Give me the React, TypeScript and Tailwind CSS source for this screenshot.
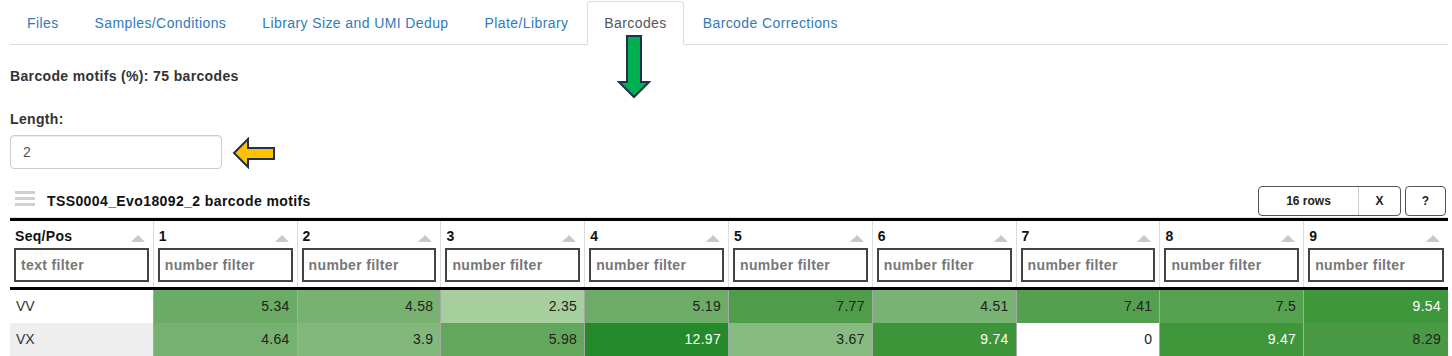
const tabs = [
  "Files",
  "Samples/Conditions",
  "Library Size and UMI Dedup",
  "Plate/Library",
  "Barcodes",
  "Barcode Corrections",
];

const columns = ["Seq/Pos", "1", "2", "3", "4", "5", "6", "7", "8", "9"];

type Cell = { v: string; bg: string; light?: boolean };

const rows: { seq: string; stripe: boolean; cells: Cell[] }[] = [
  {
    seq: "VV",
    stripe: false,
    cells: [
      { v: "5.34", bg: "#6aab65" },
      { v: "4.58", bg: "#78b271" },
      { v: "2.35", bg: "#a7cf9e" },
      { v: "5.19", bg: "#6cac66" },
      { v: "7.77", bg: "#4f9d4a" },
      { v: "4.51", bg: "#79b373" },
      { v: "7.41", bg: "#54a04f" },
      { v: "7.5", bg: "#55a150" },
      { v: "9.54", bg: "#3f973b", light: true },
    ],
  },
  {
    seq: "VX",
    stripe: true,
    cells: [
      { v: "4.64", bg: "#77b171" },
      { v: "3.9", bg: "#83b87c" },
      { v: "5.98", bg: "#62a75c" },
      { v: "12.97", bg: "#248a2b", light: true },
      { v: "3.67", bg: "#88bb81" },
      { v: "9.74", bg: "#3c9539", light: true },
      { v: "0", bg: "#ffffff" },
      { v: "9.47", bg: "#3f963b", light: true },
      { v: "8.29", bg: "#4a9a45" },
    ],
  },
];

function SortCaret() {
  return (
    <svg width="14" height="7" viewBox="0 0 14 7" className="mt-[4px] shrink-0">
      <polygon points="0,7 7,0 14,7" fill="#c8c8c8" />
    </svg>
  );
}

function HeaderCell({ label, last }: { label: string; last: boolean }) {
  return (
    <div
      className={`px-[4px] pt-[5px] pb-[5px] ${last ? "" : "border-r border-[#dddddd]"}`}
    >
      <div className="flex h-[20px] items-center justify-between pl-px pr-[4px]">
        <span className="text-[14px] font-bold leading-[20px] tracking-[0.3px] text-[#111]">
          {label}
        </span>
        <SortCaret />
      </div>
      <input
        readOnly
        placeholder={label === "Seq/Pos" ? "text filter" : "number filter"}
        className="mt-[2px] block h-[34px] w-full border-2 border-[#444] bg-white px-[5px] text-[14px] font-bold tracking-[0.35px] text-[#333] outline-none placeholder:text-[#777]"
      />
    </div>
  );
}

export default function App() {
  return (
    <div className="relative w-[1452px] bg-white pl-[10px] pr-[4px] font-['Liberation_Sans',Arial,sans-serif] text-[#333]">
      <ul className="mt-px flex border-b border-[#dddddd]">
        {tabs.map((t) => {
          const active = t === "Barcodes";
          return (
            <li key={t} className="-mb-px mr-[2px]">
              <span
                className={`block rounded-t-[4px] border px-[16px] py-[10px] text-[14px] leading-[22px] tracking-[0.4px] ${
                  active
                    ? "border-[#dddddd] border-b-white bg-white text-[#555]"
                    : "border-transparent text-[#337ab7]"
                }`}
              >
                {t}
              </span>
            </li>
          );
        })}
      </ul>

      <div className="mt-[21px] text-[14px] font-bold leading-[20px] tracking-[0.35px]">
        Barcode motifs (%): 75 barcodes
      </div>

      <div className="mt-[23px] text-[14px] font-bold leading-[20px] tracking-[0.35px]">
        Length:
      </div>
      <input
        readOnly
        value="2"
        className="mt-[6px] block h-[34px] w-[212px] rounded-[4px] border border-[#cccccc] px-[12px] text-[14px] text-[#555] shadow-[inset_0_1px_1px_rgba(0,0,0,0.075)] outline-none"
      />

      <div className="mt-[17px] flex h-[32px] items-start justify-between border-b border-[#e4e4e4]">
        <div className="flex items-start">
          <div className="ml-[5px] mt-[5px] flex w-[20px] flex-col gap-[3px]">
            <span className="h-[3px] bg-[#d0d0d0]" />
            <span className="h-[3px] bg-[#d0d0d0]" />
            <span className="h-[3px] bg-[#d0d0d0]" />
          </div>
          <div className="ml-[12px] mt-[5px] text-[14px] font-bold leading-[20px] tracking-[0.4px] text-[#111]">
            TSS0004_Evo18092_2 barcode motifs
          </div>
        </div>
        <div className="mr-[2px] flex gap-[4px] text-[12px] font-bold text-[#222]">
          <div className="flex h-[30px] overflow-hidden rounded-[4px] border border-[#555]">
            <span className="flex w-[100px] items-center justify-center border-r border-[#cccccc]">
              16 rows
            </span>
            <span className="flex w-[41px] items-center justify-center">X</span>
          </div>
          <span className="flex h-[30px] w-[41px] items-center justify-center rounded-[4px] border border-[#555]">
            ?
          </span>
        </div>
      </div>

      <div className="border-t-[3px] border-black">
        <div className="grid grid-cols-10 border-b-[3px] border-black">
          {columns.map((c, i) => (
            <HeaderCell key={c} label={c} last={i === columns.length - 1} />
          ))}
        </div>
        {rows.map((r) => (
          <div key={r.seq} className="grid grid-cols-10">
            <div
              className={`h-[33px] border-r border-[#a8a8a8] pl-[6px] text-[14px] leading-[33px] ${
                r.stripe ? "bg-[#eeeeee]" : "bg-white"
              }`}
            >
              {r.seq}
            </div>
            {r.cells.map((c, i) => (
              <div
                key={i}
                style={{ backgroundColor: c.bg }}
                className={`h-[33px] px-[7px] text-right text-[14px] leading-[33px] tracking-[0.3px] ${
                  i === r.cells.length - 1 ? "" : "border-r border-[#a8a8a8]"
                } ${c.light ? "text-white" : "text-[#222]"}`}
              >
                {c.v}
              </div>
            ))}
          </div>
        ))}
      </div>

      <svg
        width="34"
        height="65"
        viewBox="0 0 34 65"
        className="absolute left-[617px] top-[33px]"
      >
        <polygon
          points="10,2 24,2 24,48 32,48 17,63 2,48 10,48"
          fill="#00b050"
          stroke="#1f3050"
          strokeWidth="2"
          strokeLinejoin="miter"
        />
      </svg>

      <svg
        width="44"
        height="32"
        viewBox="0 0 44 32"
        className="absolute left-[232px] top-[136px]"
      >
        <polygon
          points="2,16 16,2 16,11 42,11 42,22 16,22 16,30"
          fill="#ffc000"
          stroke="#1f3050"
          strokeWidth="2"
        />
      </svg>
    </div>
  );
}
